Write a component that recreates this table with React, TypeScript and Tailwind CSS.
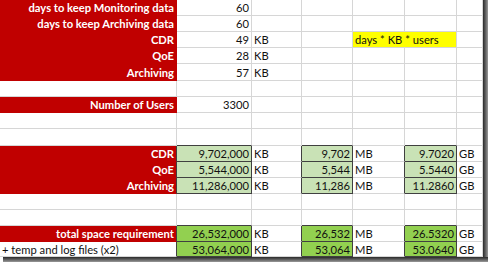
type Kind = "r" | "w" | "g" | "G" | "y";

type Cell = { t?: string; k?: Kind; a?: "l" | "r"; span?: number };

const W = (t?: string, a: "l" | "r" = "r"): Cell => ({ t, k: "w", a });
const R = (t: string): Cell => ({ t, k: "r", a: "r" });
const g = (t: string): Cell => ({ t, k: "g", a: "r" });
const G = (t: string): Cell => ({ t, k: "G", a: "r" });
const E = (): Cell => ({ k: "w" });

const rows: Cell[][] = [
  [R("days to keep Monitoring data"), W("60"), E(), E(), E(), E(), E()],
  [R("days to keep Archiving data"), W("60"), E(), E(), E(), E(), E()],
  [R("CDR"), W("49"), W("KB", "l"), E(), { t: "days * KB * users", k: "y", a: "l", span: 2 }, E()],
  [R("QoE"), W("28"), W("KB", "l"), E(), E(), E(), E()],
  [R("Archiving"), W("57"), W("KB", "l"), E(), E(), E(), E()],
  [E(), E(), E(), E(), E(), E(), E()],
  [R("Number of Users"), W("3300"), E(), E(), E(), E(), E()],
  [E(), E(), E(), E(), E(), E(), E()],
  [E(), E(), E(), E(), E(), E(), E()],
  [R("CDR"), g("9,702,000"), W("KB", "l"), g("9,702"), W("MB", "l"), g("9.7020"), W("GB", "l")],
  [R("QoE"), g("5,544,000"), W("KB", "l"), g("5,544"), W("MB", "l"), g("5.5440"), W("GB", "l")],
  [R("Archiving"), g("11,286,000"), W("KB", "l"), g("11,286"), W("MB", "l"), g("11.2860"), W("GB", "l")],
  [E(), E(), E(), E(), E(), E(), E()],
  [E(), E(), E(), E(), E(), E(), E()],
  [R("total space requirement"), G("26,532,000"), W("KB", "l"), G("26,532"), W("MB", "l"), G("26.5320"), W("GB", "l")],
  [W("+ temp and log files (x2)", "l"), G("53,064,000"), W("KB", "l"), G("53,064"), W("MB", "l"), G("53.0640"), W("GB", "l")],
];

const isGreen = (k?: Kind) => k === "g" || k === "G";

const bg: Record<Kind, string> = {
  r: "bg-[#c00000] text-white font-bold",
  w: "bg-white text-[#111]",
  g: "bg-[#c9e2b6] text-[#111]",
  G: "bg-[#92d050] text-[#111]",
  y: "bg-[#ffff00] text-[#111]",
};

const rightBorder = {
  dark: "border-r-[#404040]",
  red: "border-r-[#c00000]",
  grid: "border-r-[#d6d6d6]",
};
const bottomBorder = {
  dark: "border-b-[#404040]",
  red: "border-b-[#c00000]",
  grid: "border-b-[#d6d6d6]",
};

// column index of each cell, honouring the span of the yellow note
const colOf = (row: Cell[], i: number) => {
  let c = 0;
  for (let j = 0; j < i; j++) c += row[j].span ?? 1;
  return c;
};
const cellAt = (row: Cell[] | undefined, col: number) => {
  if (!row) return undefined;
  let c = 0;
  for (const cell of row) {
    const s = cell.span ?? 1;
    if (col >= c && col < c + s) return cell;
    c += s;
  }
  return undefined;
};

export default function App() {
  return (
    <div className="w-[488px] h-[262px] bg-white overflow-hidden flex flex-col font-['Lato',sans-serif] text-[11.2px] leading-none">
      <div className="flex">
        <div className="w-[483px] grid grid-cols-[177px_75px_50px_51px_52px_52px_26px] grid-rows-[16px_16px_16px_16px_17px_16px_16px_16px_17px_16px_16px_16px_16px_16px_16px_15px]">
          {rows.map((row, r) =>
            row.map((cell, i) => {
              const k = cell.k ?? "w";
              const col = colOf(row, i);
              const span = cell.span ?? 1;
              const right = cellAt(row, col + span);
              const below = cellAt(rows[r + 1], col);
              const rb =
                isGreen(k) || isGreen(right?.k)
                  ? rightBorder.dark
                  : k === "r"
                  ? rightBorder.red
                  : rightBorder.grid;
              const bb =
                isGreen(k) || isGreen(below?.k)
                  ? bottomBorder.dark
                  : k === "r"
                  ? bottomBorder.red
                  : bottomBorder.grid;
              return (
                <div
                  key={`${r}-${i}`}
                  className={`${bg[k]} ${rb} ${bb} ${span === 2 ? "col-span-2" : ""} border-r border-b pt-px flex items-center whitespace-nowrap ${
                    cell.a === "l" ? "justify-start pl-[2px]" : "justify-end pr-[2px]"
                  }`}
                >
                  {cell.t}
                </div>
              );
            })
          )}
        </div>
        <div className="w-[5px] bg-gradient-to-r from-[#2a2a2a] to-[#9a9a9a]" />
      </div>
      <div className="h-[5px] ml-[3px] bg-gradient-to-b from-[#2a2a2a] to-[#9a9a9a]" />
    </div>
  );
}
